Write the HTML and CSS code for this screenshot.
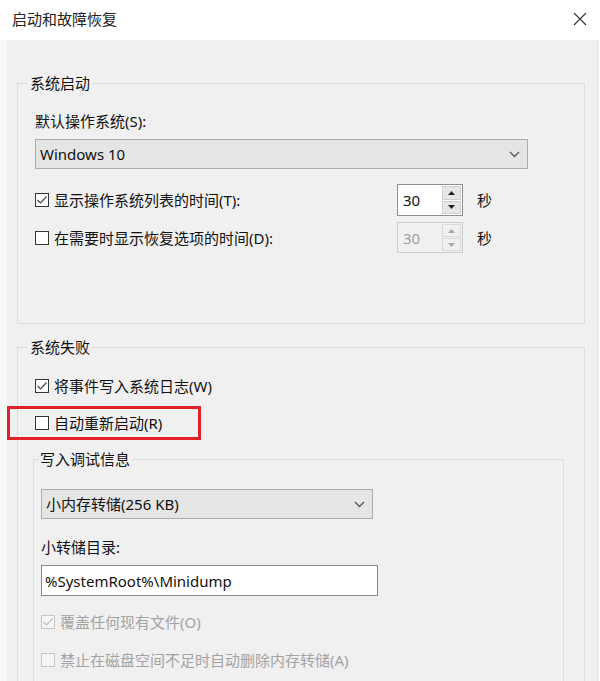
FILE: index.html
```html
<!DOCTYPE html>
<html lang="zh-CN">
<head>
<meta charset="utf-8">
<title>启动和故障恢复</title>
<link rel="stylesheet" href="styles.css">
</head>
<body>
<div class="window">
  <div class="titlebar">
    <span class="title">启动和故障恢复</span>
    <svg class="close" width="14" height="14" viewBox="0 0 14 14"><path d="M1 1 L13 13 M13 1 L1 13" stroke="#333" stroke-width="1.1" fill="none"/></svg>
  </div>
  <div class="frame">
    <div class="body">
      <fieldset class="group g1">
        <legend>系统启动</legend>
        <div class="content c1">
          <div class="label l-os">默认操作系统(S):</div>
          <div class="select s1">
            <span>Windows 10</span>
            <svg class="chev" width="11" height="7" viewBox="0 0 11 7"><polyline points="1,1 5.5,5.5 10,1" stroke="#555" stroke-width="1.3" fill="none"/></svg>
          </div>
          <div class="row r-time">
            <div class="check wide">
              <span class="box"><svg width="12" height="12" viewBox="0 0 12 12"><polyline points="1.5,6 4.5,9 10.5,2.5" stroke="#444" stroke-width="1.2" fill="none"/></svg></span>
              <span class="text">显示操作系统列表的时间(T):</span>
            </div>
            <div class="spin">
              <span class="val">30</span>
              <span class="btns">
                <span class="btn"><svg width="7" height="4" viewBox="0 0 7 4"><polygon points="0,4 3.5,0 7,4" fill="#222"/></svg></span>
                <span class="btn"><svg width="7" height="4" viewBox="0 0 7 4"><polygon points="0,0 3.5,4 7,0" fill="#222"/></svg></span>
              </span>
            </div>
            <span class="unit">秒</span>
          </div>
          <div class="row r-rec">
            <div class="check wide">
              <span class="box"></span>
              <span class="text">在需要时显示恢复选项的时间(D):</span>
            </div>
            <div class="spin disabled">
              <span class="val">30</span>
              <span class="btns">
                <span class="btn"><svg width="7" height="4" viewBox="0 0 7 4"><polygon points="0,4 3.5,0 7,4" fill="#a8a8a8"/></svg></span>
                <span class="btn"><svg width="7" height="4" viewBox="0 0 7 4"><polygon points="0,0 3.5,4 7,0" fill="#a8a8a8"/></svg></span>
              </span>
            </div>
            <span class="unit">秒</span>
          </div>
        </div>
      </fieldset>

      <fieldset class="group g2">
        <legend>系统失败</legend>
        <div class="content c2">
          <div class="check r-log">
            <span class="box"><svg width="12" height="12" viewBox="0 0 12 12"><polyline points="1.5,6 4.5,9 10.5,2.5" stroke="#444" stroke-width="1.2" fill="none"/></svg></span>
            <span class="text">将事件写入系统日志(W)</span>
          </div>
          <div class="check r-restart">
            <span class="box"></span>
            <span class="text">自动重新启动(R)</span>
            <span class="highlight"></span>
          </div>
          <fieldset class="group g3">
            <legend>写入调试信息</legend>
            <div class="content c3">
              <div class="select s2">
                <span>小内存转储(256 KB)</span>
                <svg class="chev" width="11" height="7" viewBox="0 0 11 7"><polyline points="1,1 5.5,5.5 10,1" stroke="#555" stroke-width="1.3" fill="none"/></svg>
              </div>
              <div class="label l-dir">小转储目录:</div>
              <div class="input">%SystemRoot%\Minidump</div>
              <div class="check dis r-over">
                <span class="box"><svg width="12" height="12" viewBox="0 0 12 12"><polyline points="1.5,6 4.5,9 10.5,2.5" stroke="#bdbdbd" stroke-width="1.2" fill="none"/></svg></span>
                <span class="text">覆盖任何现有文件(O)</span>
              </div>
              <div class="check dis r-del">
                <span class="box"></span>
                <span class="text">禁止在磁盘空间不足时自动删除内存转储(A)</span>
              </div>
            </div>
          </fieldset>
        </div>
      </fieldset>
    </div>
  </div>
</div>
</body>
</html>
```

FILE: styles.css
```css
* { box-sizing: border-box; }

body {
  margin: 0;
  background: #f8f8f8;
  font-family: "Noto Sans", "Noto Sans CJK SC", sans-serif;
  font-size: 15px;
  line-height: 20px;
  color: #111;
}

.window {
  width: 600px;
  height: 681px;
  overflow: hidden;
  display: flex;
  flex-direction: column;
}

.titlebar {
  flex: none;
  height: 40px;
  background: #fff;
  display: flex;
  align-items: center;
  justify-content: space-between;
  padding: 0 13px 3px 12px;
}

.title {
  font-size: 15px;
  color: #222;
}

.frame {
  flex: 1;
  display: flex;
  padding-left: 7px;
}

.body {
  width: 591px;
  background: #f0f0f0;
  border-right: 1px solid #e2e2e2;
  padding-left: 10px;
}

.group {
  margin: 0;
  padding: 0;
  border: 1px solid #dcdcdc;
  min-width: 0;
}

.group > legend {
  padding: 0 2px;
  margin-left: 10px;
  line-height: 20px;
  font-size: 15px;
  color: #111;
}

.g1 {
  margin-top: 33px;
  margin-right: 12px;
}

.c1 {
  padding: 0 0 70px 17px;
}

.label {
  height: 20px;
}

.l-os {
  margin-top: 18px;
}

.select {
  height: 30px;
  background: #e5e5e5;
  border: 1px solid #adadad;
  display: flex;
  align-items: center;
  justify-content: space-between;
  padding: 0 7px 0 4px;
}

.s1 {
  margin-top: 8px;
  width: 493px;
}

.row {
  display: flex;
  align-items: center;
}

.r-time {
  margin-top: 15px;
  height: 32px;
}

.r-rec {
  margin-top: 6px;
  height: 31px;
}

.check {
  display: flex;
  align-items: center;
  height: 20px;
}

.check.wide {
  width: 362px;
}

.box {
  flex: none;
  width: 14px;
  height: 14px;
  border: 1px solid #333;
  background: #fff;
  margin-right: 5px;
  display: flex;
  align-items: center;
  justify-content: center;
}

.check.dis .box {
  border-color: #c6c6c6;
  background: #f6f6f6;
}

.check.dis .text {
  color: #a3a3a3;
}

.spin {
  width: 66px;
  height: 100%;
  display: flex;
  border: 1px solid #8f8f8f;
  background: #fff;
}

.spin .val {
  flex: 1;
  display: flex;
  align-items: center;
  padding-left: 5px;
}

.spin .btns {
  width: 20px;
  display: flex;
  flex-direction: column;
  gap: 1px;
  padding: 1px 1px 1px 0;
  background: #fff;
}

.spin .btn {
  flex: 1;
  display: flex;
  align-items: center;
  justify-content: center;
  background: #e6e6e6;
  border: 1px solid #cfcfcf;
}

.spin.disabled {
  border-color: #cccccc;
  background: #f0f0f0;
}

.spin.disabled .val {
  color: #a0a0a0;
}

.spin.disabled .btns {
  background: #f0f0f0;
}

.spin.disabled .btn {
  background: #f0f0f0;
  border-color: #dadada;
}

.unit {
  margin-left: 14px;
}

.g2 {
  margin-top: 13px;
  margin-right: 12px;
}

.c2 {
  padding: 0 0 0 17px;
}

.r-log {
  margin-top: 19px;
}

.r-restart {
  margin-top: 17px;
  position: relative;
}

.highlight {
  position: absolute;
  left: -28px;
  top: -7px;
  width: 194px;
  height: 34px;
  border: 3px solid #e3212a;
}

.g3 {
  margin: 16px 20px 0 -2px;
}

.g3 > legend {
  margin-left: 4px;
}

.c3 {
  padding: 0 0 30px 7px;
}

.s2 {
  margin-top: 20px;
  width: 332px;
}

.l-dir {
  margin-top: 18px;
}

.input {
  margin-top: 8px;
  width: 337px;
  height: 31px;
  background: #fff;
  border: 1px solid #8a8a8a;
  padding-left: 3px;
  display: flex;
  align-items: center;
}

.r-over {
  margin-top: 16px;
}

.r-del {
  margin-top: 18px;
}
```
